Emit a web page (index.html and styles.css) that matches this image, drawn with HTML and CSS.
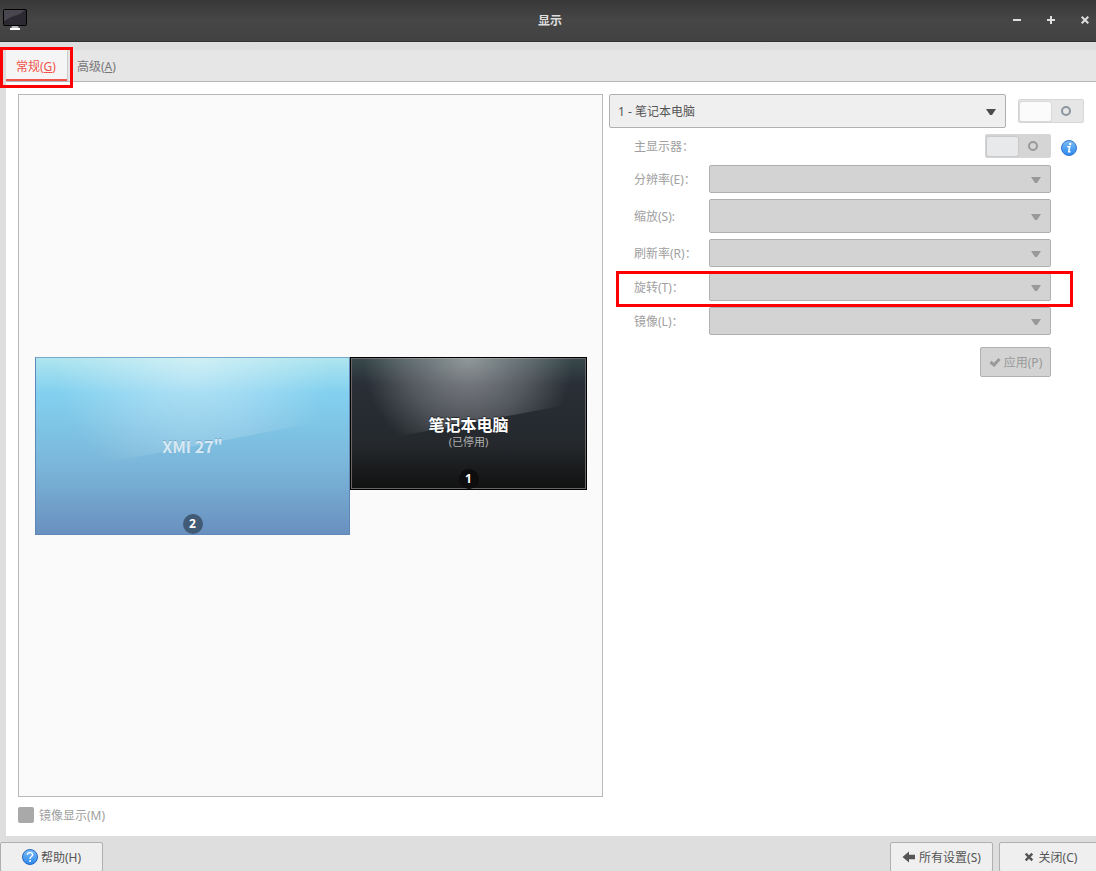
FILE: index.html
```html
<!DOCTYPE html>
<html lang="zh-CN">
<head>
<meta charset="utf-8">
<title>显示</title>
<link rel="stylesheet" href="styles.css">
</head>
<body>
<div class="window">
  <header class="titlebar">
    <svg class="app-icon" width="24" height="22" viewBox="0 0 24 22" aria-hidden="true">
      <rect x="0.5" y="0.5" width="23" height="16" rx="1" fill="#2d2933" stroke="#000" />
      <path d="M1 1H22L17 5Q9 7 1 12Z" fill="#55525d" opacity=".7" />
      <path d="M9 17H15L16 20H8Z" fill="#bbb" />
      <path d="M7 19H17V21H7Z" fill="#fff" />
    </svg>
    <h1 class="title">显示</h1>
    <div class="window-controls">
      <button class="control" type="button" aria-label="最小化"><svg width="10" height="10" viewBox="0 0 10 10"><path d="M1 5H9" /></svg></button>
      <button class="control" type="button" aria-label="最大化"><svg width="10" height="10" viewBox="0 0 10 10"><path d="M1 5H9M5 1V9" /></svg></button>
      <button class="control" type="button" aria-label="关闭窗口"><svg width="10" height="10" viewBox="0 0 10 10"><path d="M1.7 1.7L8.3 8.3M8.3 1.7L1.7 8.3" /></svg></button>
    </div>
  </header>

  <nav class="tabs" role="tablist">
    <button class="tab tab-active" type="button" role="tab" aria-selected="true">常规(<u>G</u>)<span class="tab-mark"></span></button>
    <button class="tab" type="button" role="tab" aria-selected="false">高级(<u>A</u>)</button>
  </nav>

  <main class="panel">
    <section class="arrangement">
      <div class="canvas">
        <div class="monitor monitor-external">
          <svg class="glare" viewBox="0 0 315 178" preserveAspectRatio="none" aria-hidden="true">
            <defs><radialGradient id="glare-light" gradientUnits="userSpaceOnUse" cx="0" cy="0" r="1" gradientTransform="translate(158 0) scale(140 140)"><stop offset="0" stop-color="#fff" stop-opacity=".42" /><stop offset="1" stop-color="#fff" stop-opacity="0" /></radialGradient></defs>
            <path d="M0 0H315V59L55 109L0 119Z" fill="url(#glare-light)" />
          </svg>
          <div class="monitor-name">XMI 27"</div>
          <span class="badge">2</span>
        </div>
        <div class="monitor monitor-laptop">
          <svg class="glare" viewBox="0 0 237 133" preserveAspectRatio="none" aria-hidden="true">
            <defs><radialGradient id="glare-dark" gradientUnits="userSpaceOnUse" cx="0" cy="0" r="1" gradientTransform="translate(118 0) scale(106 106)"><stop offset="0" stop-color="#fff" stop-opacity=".44" /><stop offset=".6" stop-color="#fff" stop-opacity=".2" /><stop offset="1" stop-color="#fff" stop-opacity="0" /></radialGradient></defs>
            <path d="M0 0H237V44L40 81L0 89Z" fill="url(#glare-dark)" />
          </svg>
          <div class="monitor-name">笔记本电脑</div>
          <div class="monitor-state">(已停用)</div>
          <span class="badge">1</span>
        </div>
      </div>
      <label class="mirror"><input class="checkbox" type="checkbox" disabled>镜像显示(M)</label>
    </section>

    <section class="settings">
      <div class="output-row">
        <div class="combo combo-tall"><select class="select" aria-label="显示器"><option>1 - 笔记本电脑</option></select></div>
        <input class="switch" type="checkbox" role="switch" aria-label="启用显示器">
      </div>
      <div class="field field-primary">
        <label for="primary">主显示器：</label>
        <input class="switch" id="primary" type="checkbox" role="switch" disabled>
        <svg class="info" width="16" height="16" viewBox="0 0 16 16" aria-hidden="true">
          <defs><linearGradient id="blue-ball" x2="0" y2="1"><stop stop-color="#7dbdf8" /><stop offset="1" stop-color="#2b88ed" /></linearGradient></defs>
          <circle cx="8" cy="8" r="7.5" fill="url(#blue-ball)" stroke="#3577cc" />
          <path d="M6.3 6.8H8.8L7.6 11.7Q7.8 12.2 9.4 11.3" fill="none" stroke="#fff" stroke-width="1.5" />
          <circle cx="9.2" cy="4" r="1.2" fill="#fff" />
        </svg>
      </div>
      <div class="field"><label for="resolution">分辨率(E)：</label><div class="combo"><select class="select" id="resolution" disabled></select></div></div>
      <div class="field"><label for="scale">缩放(S):</label><div class="combo combo-tall"><select class="select" id="scale" disabled></select></div></div>
      <div class="field"><label for="rate">刷新率(R)：</label><div class="combo"><select class="select" id="rate" disabled></select></div></div>
      <div class="field"><label for="rotation">旋转(T)：</label><div class="combo"><select class="select" id="rotation" disabled></select></div><span class="field-mark"></span></div>
      <div class="field"><label for="reflection">镜像(L)：</label><div class="combo"><select class="select" id="reflection" disabled></select></div></div>
      <div class="actions">
        <button class="button button-apply" type="button" disabled><svg width="12" height="12" viewBox="0 0 12 12" aria-hidden="true"><path d="M1.5 6L5 9L10.5 3" fill="none" stroke="currentColor" stroke-width="3" /></svg>应用(P)</button>
      </div>
    </section>
  </main>

  <footer class="footer">
    <button class="button button-help" type="button"><svg width="16" height="16" viewBox="0 0 16 16" aria-hidden="true"><circle cx="8" cy="8" r="7.5" fill="url(#blue-ball)" stroke="#2868c0" /><path d="M5.3 5.8Q5.3 3.6 8 3.6Q10.6 3.6 10.6 5.8Q10.6 7 9 8Q8 8.6 8 10" fill="none" stroke="#fff" stroke-width="1.4" /><circle cx="8" cy="12" r="1" fill="#fff" /></svg>帮助(H)</button>
    <button class="button button-all" type="button"><svg width="14" height="12" viewBox="0 0 14 12" aria-hidden="true"><path d="M0.5 6L7 0.5V3.8H13V8.2H7V11.5Z" fill="currentColor" /></svg>所有设置(S)</button>
    <button class="button button-close" type="button"><svg width="10" height="10" viewBox="0 0 10 10" aria-hidden="true"><path d="M1.7 1.7L8.3 8.3M8.3 1.7L1.7 8.3" fill="none" stroke="currentColor" stroke-width="2.4" /></svg>关闭(C)</button>
  </footer>
</div>
</body>
</html>
```
FILE: styles.css
```css
*, *::before, *::after { box-sizing: border-box; }

body {
  margin: 0;
  overflow: hidden;
  background: #dedede;
  color: #555;
  font: 12px/19px "Noto Sans", "Noto Sans CJK SC", sans-serif;
}

button, select, input { font: inherit; color: inherit; margin: 0; }

.window {
  display: flex;
  flex-direction: column;
  height: 100vh;
}

.titlebar {
  display: grid;
  grid-template-columns: 1fr auto 1fr;
  align-items: center;
  flex: none;
  height: 42px;
  padding: 0 4px 2px 3px;
  background: linear-gradient(#383838, #464646 50%, #424242);
  border-bottom: 1px solid #303030;
  color: #dedede;
}
.title { margin: 0; padding: 1px 0 0 5px; font-size: 12px; font-weight: 700; }
.window-controls { display: flex; justify-content: flex-end; gap: 20px; }
.control { display: flex; padding: 2px; border: 0; background: none; }
.control path { fill: none; stroke: #dedede; stroke-width: 2; }

.tabs {
  display: flex;
  flex: none;
  height: 32px;
  margin: 8px 0 0 6px;
  background: #e6e6e6;
  border-bottom: 1px solid #b8b8b8;
}
.tab {
  position: relative;
  padding: 2px 9px 0;
  border: 0;
  background: none;
  color: #777;
}
.tab-active {
  padding: 2px 11px 0 10px;
  background: #f5f5f5;
  color: #f0544c;
  border-right: 1px solid #ccc;
  box-shadow: inset 0 -2px #f0544c;
}
.tab-mark {
  position: absolute;
  z-index: 1;
  inset: -3px -6px -7px -6px;
  border: 3px solid #f00;
}

.panel {
  display: grid;
  grid-template-columns: 1fr 475px;
  gap: 6px;
  flex: 1;
  min-height: 0;
  margin-left: 6px;
  padding: 12px 12px 11px;
  background: #fff;
}

.arrangement { display: flex; flex-direction: column; gap: 8px; }
.canvas {
  position: relative;
  flex: 1;
  background: #fafafa;
  border: 1px solid #b8b8b8;
}
.monitor {
  position: absolute;
  display: flex;
  flex-direction: column;
  align-items: center;
  justify-content: center;
  color: #fff;
}
.monitor-external {
  left: 16px;
  top: 262px;
  width: 315px;
  height: 178px;
  background: linear-gradient(#aee5ef, #82d0ef 20%, #7bb7da 60%, #6990bf);
  border: 1px solid #5d88b8;
  border-top-color: #78a9c8;
}
.monitor-laptop {
  left: 331px;
  top: 262px;
  width: 237px;
  height: 133px;
  padding-top: 16px;
  background: linear-gradient(#38494c, #292f37 20%, #25292d 65%, #111);
  border: 1px solid #000;
  box-shadow: inset 0 0 0 1px #666;
}
.glare { position: absolute; inset: 0; width: 100%; height: 100%; }
.monitor-name {
  position: relative;
  font-size: 16px;
  line-height: 20px;
  font-weight: 700;
  text-shadow: 0 -1px 1px #0008;
}
.monitor-external .monitor-name {
  color: #d6e8f3;
  font-family: "Noto Sans CJK SC", sans-serif;
  text-shadow: 0 -1px 0 #4b81a066;
}
.monitor-state { position: relative; font-size: 11px; line-height: 14px; color: #b0b0b0; }
.badge {
  position: absolute;
  bottom: 0;
  width: 20px;
  border-radius: 10px;
  background: #415a75;
  font-weight: 700;
  line-height: 20px;
  text-align: center;
}
.monitor-laptop .badge { background: #0d0d0d; }

.mirror { display: flex; align-items: center; gap: 5px; height: 20px; color: #a0a0a0; }
.checkbox {
  appearance: none;
  width: 16px;
  height: 16px;
  border-radius: 2px;
  background: #a9a9a9;
}

.settings { display: flex; flex-direction: column; gap: 6px; }
.output-row {
  display: grid;
  grid-template-columns: 1fr 66px;
  align-items: center;
  gap: 12px;
}
.combo { position: relative; height: 28px; }
.combo-tall { height: 34px; }
.combo::after {
  content: "";
  position: absolute;
  right: 10px;
  top: 50%;
  width: 10px;
  height: 6px;
  margin-top: -2px;
  background: #4c4c4c;
  clip-path: polygon(0 0, 100% 0, 60% 100%, 40% 100%);
  pointer-events: none;
}
.field .combo::after { background: #999; }
.select {
  appearance: none;
  display: block;
  width: 100%;
  height: 100%;
  padding: 1px 28px 0 8px;
  border: 1px solid #b0b0b0;
  border-radius: 2px;
  background: #efefef;
}
.select:disabled { opacity: 1; background: #d3d3d3; }

.switch {
  appearance: none;
  display: flex;
  align-items: center;
  justify-content: space-between;
  width: 66px;
  height: 24px;
  padding: 0 12px 0 1px;
  border: 1px solid #d6d6d6;
  border-radius: 2px;
  background: #e6e6e6;
}
.switch::before {
  content: "";
  width: 31px;
  height: 19px;
  border-radius: 2px;
  background: #fbfbfb;
  box-shadow: 0 0 2px #0003;
}
.switch::after {
  content: "";
  width: 10px;
  height: 10px;
  border: 2px solid #8c959d;
  border-radius: 50%;
}
.switch:disabled { background: #d5d5d5; }
.switch:disabled::before { background: #e8e9ea; }
.switch:disabled::after { border-color: #999; }

.field {
  position: relative;
  display: grid;
  grid-template-columns: 75px 1fr;
  align-items: center;
  margin: 0 33px 0 25px;
  color: #a0a0a0;
}
.field-primary { min-height: 25px; align-items: start; }
.field-primary label { padding-top: 3px; }
.field-primary .switch { justify-self: end; }
.info { position: absolute; right: -26px; bottom: 3px; }
.field-mark {
  position: absolute;
  inset: -2px -22px -6px -18px;
  border: 3px solid #f00;
}

.actions { display: flex; justify-content: flex-end; margin: 6px 33px 0 0; }
.button {
  display: flex;
  align-items: center;
  justify-content: center;
  gap: 3px;
  height: 30px;
  padding: 0;
  border: 1px solid #b0b0b0;
  border-radius: 2px;
  background: #efefef;
}
.button:disabled { background: #d3d3d3; color: #999; }
.button-apply { width: 71px; }

.footer {
  display: flex;
  gap: 6px;
  flex: none;
  height: 35px;
  padding-top: 6px;
}
.footer .button { flex: none; width: 103px; }
.button-all { margin-left: auto; }
.button-close { margin-right: -6px; gap: 5px; }
```
